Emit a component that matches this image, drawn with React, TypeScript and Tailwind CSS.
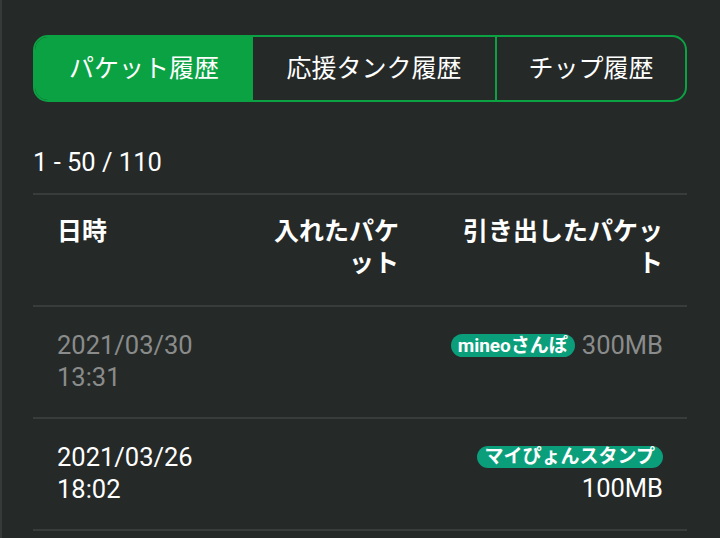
import React from "react";

const font = { fontFamily: "Roboto, 'Noto Sans CJK JP', sans-serif" };

export default function App() {
  return (
    <div
      className="w-[720px] h-[538px] overflow-hidden bg-[#252928] text-white border-l-2 border-[#363a39]"
      style={font}
    >
      <div className="pl-[31px] pr-[33px] pt-[35px]">
        <div className="flex h-[67px] rounded-[15px] border-2 border-[#0ba243] overflow-hidden text-[25px]">
          <div className="w-[218px] flex items-center justify-center bg-[#0ba243]">パケット履歴</div>
          <div className="w-[244px] flex items-center justify-center border-r-2 border-[#0ba243]">応援タンク履歴</div>
          <div className="flex-1 flex items-center justify-center">チップ履歴</div>
        </div>
        <div className="mt-[44px] text-[25.5px] leading-[32px] h-[47px]">1 - 50 / 110</div>
        <div className="border-t-2 border-[#383c3b]">
          <div className="flex pt-[21px] text-[25px] leading-[32px] font-bold h-[110px]">
            <div className="flex-1 pl-[24px]">日時</div>
            <div className="w-[150px] text-right pr-[24px] break-all">入れたパケット</div>
            <div className="w-[264px] text-right pr-[24px] pl-[36px] break-all">引き出したパケット</div>
          </div>
        </div>
        <div className="border-t-2 border-[#383c3b] h-[112px] flex pt-[22px] text-[25.5px] leading-[32px]">
          <div className="flex-1 pl-[24px] text-[#8a8c8b]">
            <div>2021/03/30</div>
            <div>13:31</div>
          </div>
          <div className="w-[264px] pr-[24px] flex justify-end items-start">
            <span className="mt-[5px] mr-[7px] h-[23px] px-[7px] rounded-full bg-[#0b9e7b] text-white font-bold text-[19px] leading-[23px]">mineoさんぽ</span>
            <span className="text-[#8a8c8b]">300MB</span>
          </div>
        </div>
        <div className="border-t-2 border-[#383c3b] h-[112px] flex pt-[22px] text-[25.5px] leading-[32px]">
          <div className="flex-1 pl-[24px]">
            <div>2021/03/26</div>
            <div>18:02</div>
          </div>
          <div className="w-[264px] pr-[24px] flex flex-col items-end">
            <span className="mt-[5px] h-[22px] px-[8px] rounded-full bg-[#0b9e7b] text-white font-bold text-[19px] leading-[22px]">マイぴょんスタンプ</span>
            <span className="mt-[4px]">100MB</span>
          </div>
        </div>
        <div className="border-t-2 border-[#383c3b]"></div>
      </div>
    </div>
  );
}
